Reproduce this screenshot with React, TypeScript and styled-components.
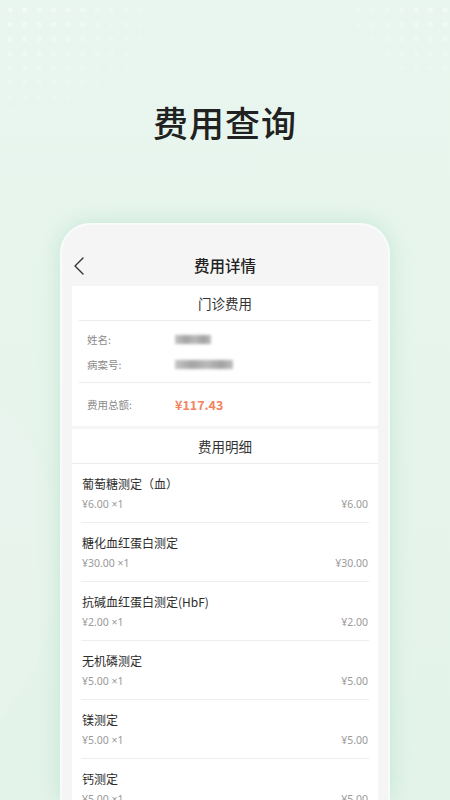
import styled, { createGlobalStyle } from "styled-components";

const GlobalStyle = createGlobalStyle`
    html, body {
        margin: 0;
        padding: 0;
        height: 100%;
    }
    body {
        font-family: "Noto Sans CJK SC", "Noto Sans", sans-serif;
        background: #e7f5ed;
    }
    #root {
        height: 100%;
    }
`

const Page = styled.div`
    position: relative;
    width: 450px;
    height: 800px;
    overflow: hidden;
    display: flex;
    flex-direction: column;
    align-items: center;
    background: linear-gradient(180deg, #e9f6ef 0%, #e6f4ec 60%, #e4f3ea 100%);

    &::before {
        content: "";
        position: absolute;
        inset: 0;
        background-image:
            radial-gradient(circle at 70% 70%, rgba(255,255,255,0.45) 2.5px, transparent 3px);
        background-size: 14.5px 14.5px;
        -webkit-mask-image:
            radial-gradient(ellipse 190px 140px at 0 0, #000 10%, transparent 100%),
            radial-gradient(ellipse 130px 100px at 100% 0, #000 5%, transparent 100%);
        mask-image:
            radial-gradient(ellipse 190px 140px at 0 0, #000 10%, transparent 100%),
            radial-gradient(ellipse 130px 100px at 100% 0, #000 5%, transparent 100%);
        pointer-events: none;
    }

    &::after {
        content: "";
        position: absolute;
        left: -420px;
        top: 320px;
        width: 480px;
        height: 480px;
        border-radius: 50%;
        background: rgba(255,255,255,0.08);
        pointer-events: none;
    }
`

const Headline = styled.h1`
    position: relative;
    z-index: 1;
    margin: 100px 0 0;
    font-size: 35px;
    line-height: 44px;
    font-weight: 500;
    color: #1f2220;
    letter-spacing: 1px;
`

const Phone = styled.div`
    position: relative;
    z-index: 1;
    margin-top: 79px;
    width: 326px;
    flex-grow: 1;
    display: flex;
    flex-direction: column;
    background: #f5f5f5;
    border: 2px solid #f7fbf9;
    border-bottom: none;
    border-radius: 30px 30px 0 0;
    box-shadow: 0 0 22px rgba(150, 215, 180, 0.45);
    overflow: hidden;

    >* {
        flex-shrink: 0;
    }
`

const StatusBar = styled.div`
    height: 19px;
`

const NavBar = styled.div`
    position: relative;
    height: 42px;
    display: flex;
    align-items: center;
    justify-content: center;
    font-size: 15.5px;
    font-weight: 500;
    color: #222;
`

const BackButton = styled.div`
    position: absolute;
    left: 10px;
    top: 12px;
    display: flex;
    >svg {
        width: 14px;
        height: 20px;
    }
`

const Body = styled.div`
    display: flex;
    flex-direction: column;
    gap: 3px;
    padding: 0 10px;
`

const Card = styled.div`
    background: #fff;
    display: flex;
    flex-direction: column;
`

const CardTitle = styled.div<{$full?: boolean}>`
    height: 34px;
    display: flex;
    align-items: center;
    justify-content: center;
    font-size: 13.5px;
    color: #333;
    margin: 0 ${({$full})=>$full ? 0 : 7}px;
    border-bottom: 1px solid #ececec;
`

const InfoBlock = styled.div`
    display: flex;
    flex-direction: column;
    gap: 5px;
    padding: 8px 0 8px;
    margin: 0 7px;
    border-bottom: 1px solid #ececec;
`

const InfoRow = styled.div`
    height: 20px;
    display: flex;
    align-items: center;
    padding-left: 8px;
`

const InfoLabel = styled.div`
    width: 88px;
    font-size: 10.5px;
    color: #8a8a8a;
`

const Blurred = styled.div<{$w: number}>`
    width: ${({$w})=>$w}px;
    height: 9px;
    background: linear-gradient(90deg, #b5b5b5 0%, #8e8e8e 30%, #a8a8a8 55%, #8a8a8a 80%, #b0b0b0 100%);
    filter: blur(1.6px);
    opacity: 0.8;
`

const TotalRow = styled.div`
    height: 43px;
    display: flex;
    align-items: center;
    padding-left: 15px;
`

const TotalValue = styled.div`
    font-size: 12.5px;
    font-weight: 600;
    color: #f3845f;
`

const ItemList = styled.div`
    display: flex;
    flex-direction: column;
    padding: 0 9px;
`

const Item = styled.div`
    height: 58px;
    display: flex;
    flex-direction: column;
    justify-content: center;
    gap: 5px;
    border-bottom: 1px solid #eeeeee;
    padding: 0 1px;
`

const ItemName = styled.div`
    font-size: 12px;
    line-height: 17px;
    color: #2c2c2c;
`

const ItemPrices = styled.div`
    display: flex;
    justify-content: space-between;
    font-family: "Noto Sans", "Noto Sans CJK SC", sans-serif;
    font-size: 10.5px;
    line-height: 15px;
    color: #9a9a9a;
`

const items = [
    {name: "葡萄糖测定（血）", unit: "¥6.00", total: "¥6.00"},
    {name: "糖化血红蛋白测定", unit: "¥30.00", total: "¥30.00"},
    {name: "抗碱血红蛋白测定(HbF)", unit: "¥2.00", total: "¥2.00"},
    {name: "无机磷测定", unit: "¥5.00", total: "¥5.00"},
    {name: "镁测定", unit: "¥5.00", total: "¥5.00"},
    {name: "钙测定", unit: "¥5.00", total: "¥5.00"},
]

export default function App() {
    return (
        <Page>
            <GlobalStyle />
            <Headline>费用查询</Headline>
            <Phone>
                <StatusBar />
                <NavBar>
                    <BackButton>
                        <svg viewBox="0 0 14 20" fill="none" stroke="#333" strokeWidth="1.4" strokeLinecap="round" strokeLinejoin="round">
                            <path d="M11 2 L3 10 L11 18" />
                        </svg>
                    </BackButton>
                    费用详情
                </NavBar>
                <Body>
                    <Card>
                        <CardTitle>门诊费用</CardTitle>
                        <InfoBlock>
                            <InfoRow>
                                <InfoLabel>姓名:</InfoLabel>
                                <Blurred $w={36} />
                            </InfoRow>
                            <InfoRow>
                                <InfoLabel>病案号:</InfoLabel>
                                <Blurred $w={58} />
                            </InfoRow>
                        </InfoBlock>
                        <TotalRow>
                            <InfoLabel>费用总额:</InfoLabel>
                            <TotalValue>¥117.43</TotalValue>
                        </TotalRow>
                    </Card>
                    <Card>
                        <CardTitle $full>费用明细</CardTitle>
                        <ItemList>
                            {items.map((it, i) => (
                                <Item key={i}>
                                    <ItemName>{it.name}</ItemName>
                                    <ItemPrices>
                                        <span>{it.unit} ×1</span>
                                        <span>{it.total}</span>
                                    </ItemPrices>
                                </Item>
                            ))}
                        </ItemList>
                    </Card>
                </Body>
            </Phone>
        </Page>
    )
}
